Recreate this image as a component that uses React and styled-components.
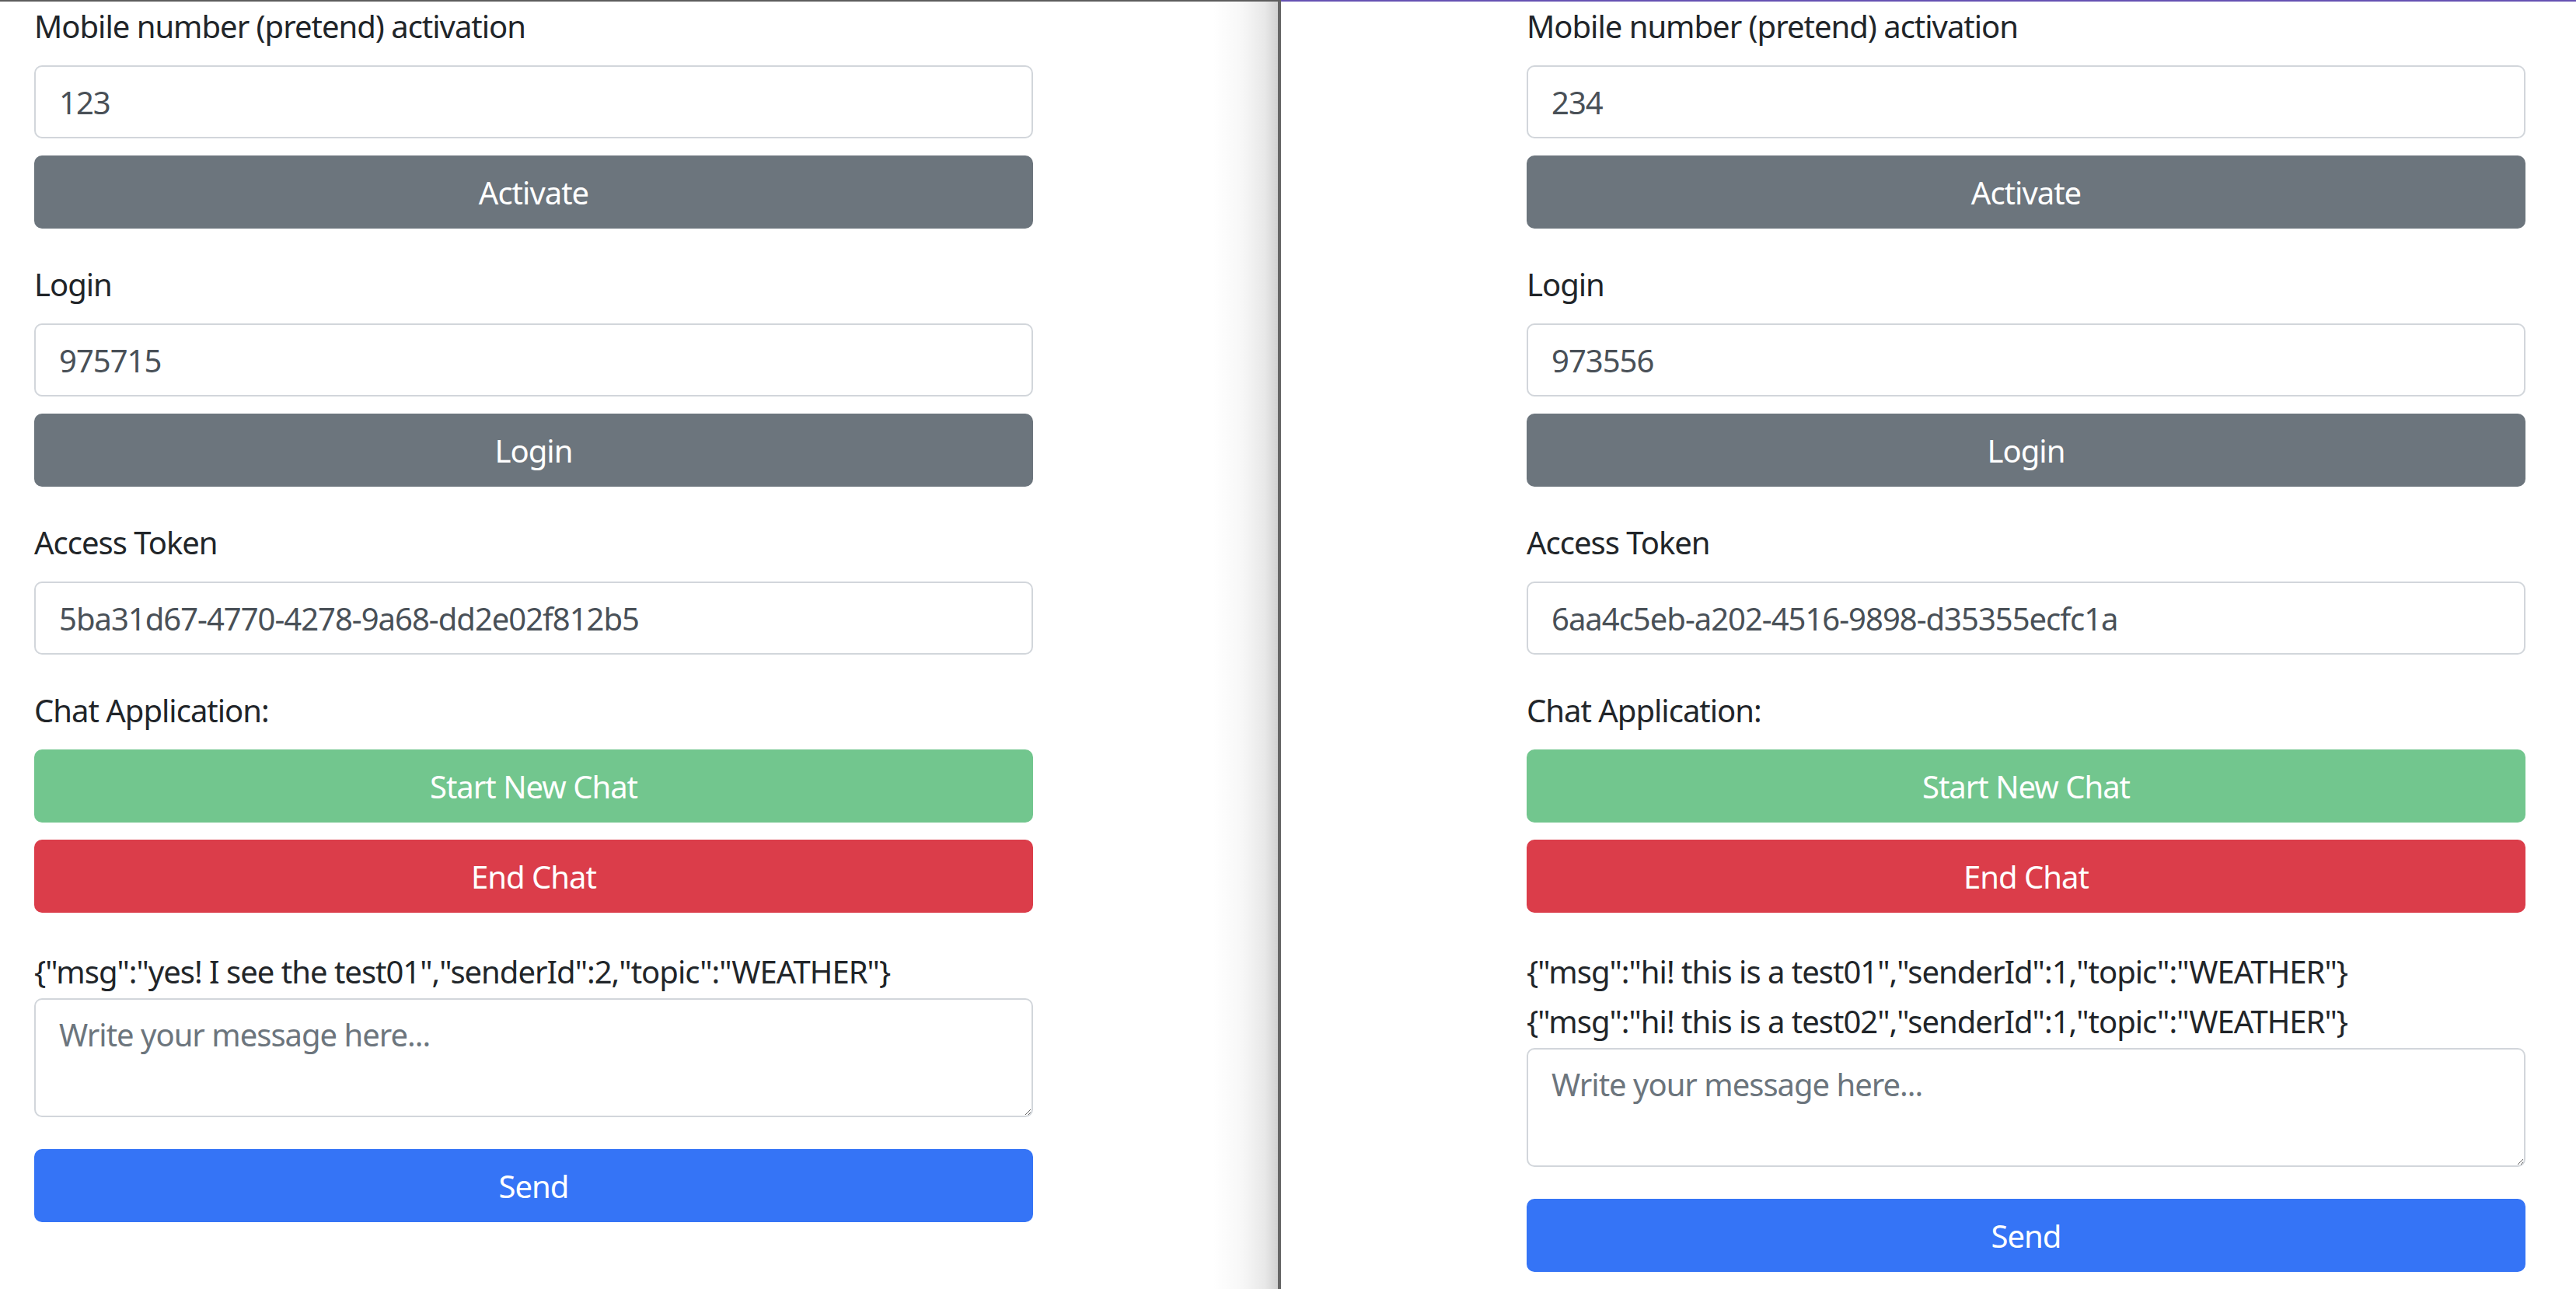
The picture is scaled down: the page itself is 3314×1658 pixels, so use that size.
import React from 'react';
import styled, { createGlobalStyle } from 'styled-components';

const sessions = [
  {
    id: 'left',
    phone: '123',
    code: '975715',
    token: '5ba31d67-4770-4278-9a68-dd2e02f812b5',
    messages: ['{"msg":"yes! I see the test01","senderId":2,"topic":"WEATHER"}'],
  },
  {
    id: 'right',
    phone: '234',
    code: '973556',
    token: '6aa4c5eb-a202-4516-9898-d35355ecfc1a',
    messages: [
      '{"msg":"hi! this is a test01","senderId":1,"topic":"WEATHER"}',
      '{"msg":"hi! this is a test02","senderId":1,"topic":"WEATHER"}',
    ],
  },
];

const ChatSession = ({ session }) => {
  return (
    <Form onSubmit={e => e.preventDefault()}>
      <Group>
        <Label>Mobile number (pretend) activation</Label>
        <Input defaultValue={session.phone} />
        <Button $tone="secondary">Activate</Button>
      </Group>
      <Group>
        <Label>Login</Label>
        <Input defaultValue={session.code} />
        <Button $tone="secondary">Login</Button>
      </Group>
      <Group>
        <Label>Access Token</Label>
        <Input defaultValue={session.token} />
      </Group>
      <Group>
        <Label>Chat Application:</Label>
        <Button $tone="success">Start New Chat</Button>
        <Button $tone="danger">End Chat</Button>
      </Group>
      <Feed>
        {session.messages.map(m => (
          <Message key={m}>{m}</Message>
        ))}
      </Feed>
      <MessageBox rows={2} placeholder="Write your message here..." />
      <SendButton $tone="primary">Send</SendButton>
    </Form>
  );
};

export default function App() {
  return (
    <>
      <GlobalStyle />
      <Desktop>
        <Window $edge="#5c5c5c" $inset={44} $shade>
          <ChatSession session={sessions[0]} />
        </Window>
        <Window $edge="#6551b3" $inset={316}>
          <ChatSession session={sessions[1]} />
        </Window>
      </Desktop>
    </>
  );
}

const GlobalStyle = createGlobalStyle`
  html, body {
    margin: 0;
    padding: 0;
    background: #fff;
  }
  body {
    font-family: "Noto Sans", "Open Sans", sans-serif;
    letter-spacing: -1px;
    color: #212529;
  }
  * {
    box-sizing: border-box;
  }
`;

const tones = {
  secondary: '#6c757d',
  success: '#72c68e',
  danger: '#db3d4a',
  primary: '#3574f6',
};

const Desktop = styled.div`
  display: flex;
  width: 3314px;
  height: 1658px;
  overflow: hidden;
`;

const Window = styled.section`
  position: relative;
  flex: ${p => (p.$shade ? '0 0 1648px' : '1 1 auto')};
  height: 100%;
  padding: 2px 0 0 ${p => p.$inset}px;
  border-top: 2px solid ${p => p.$edge};
  border-right: ${p => (p.$shade ? '4px solid #666' : 'none')};
  background: #fff;

  &::after {
    content: '';
    display: ${p => (p.$shade ? 'block' : 'none')};
    position: absolute;
    top: 0;
    right: 0;
    bottom: 0;
    width: 84px;
    pointer-events: none;
    background: linear-gradient(
      to right,
      rgba(0, 0, 0, 0) 0%,
      rgba(0, 0, 0, 0.03) 45%,
      rgba(0, 0, 0, 0.09) 80%,
      rgba(0, 0, 0, 0.18) 100%
    );
  }
`;

const Form = styled.form`
  display: flex;
  flex-direction: column;
  width: 1285px;
`;

const Group = styled.div`
  display: flex;
  flex-direction: column;
  margin-bottom: 42px;
`;

const Label = styled.label`
  font-size: 40px;
  line-height: 60px;
  margin-bottom: 20px;
  color: #212529;
`;

const Input = styled.input`
  display: block;
  width: 100%;
  height: 94px;
  padding: 0 30px;
  font-family: inherit;
  font-size: 40px;
  letter-spacing: inherit;
  color: #495057;
  background: #fff;
  border: 2px solid #d2d6db;
  border-radius: 10px;
  outline: none;
`;

const Button = styled.button`
  display: block;
  width: 100%;
  height: 94px;
  margin-top: 22px;
  padding: 0;
  font-family: inherit;
  font-size: 40px;
  letter-spacing: inherit;
  color: #fff;
  background: ${p => tones[p.$tone]};
  border: none;
  border-radius: 10px;
  cursor: pointer;

  ${Label} + & {
    margin-top: 0;
  }
`;

const SendButton = styled(Button)`
  margin-top: 41px;
`;

const Feed = styled.div`
  display: flex;
  flex-direction: column;
  margin-top: 4px;
`;

const Message = styled.div`
  font-size: 40px;
  line-height: 60px;
  margin-bottom: 4px;
  color: #212529;
  white-space: nowrap;
`;

const MessageBox = styled.textarea`
  display: block;
  width: 100%;
  height: 153px;
  padding: 15px 30px;
  font-family: inherit;
  font-size: 40px;
  line-height: 60px;
  letter-spacing: inherit;
  color: #495057;
  border: 2px solid #d2d6db;
  border-radius: 10px;
  resize: vertical;
  outline: none;

  &::placeholder {
    color: #6c757d;
  }
`;
